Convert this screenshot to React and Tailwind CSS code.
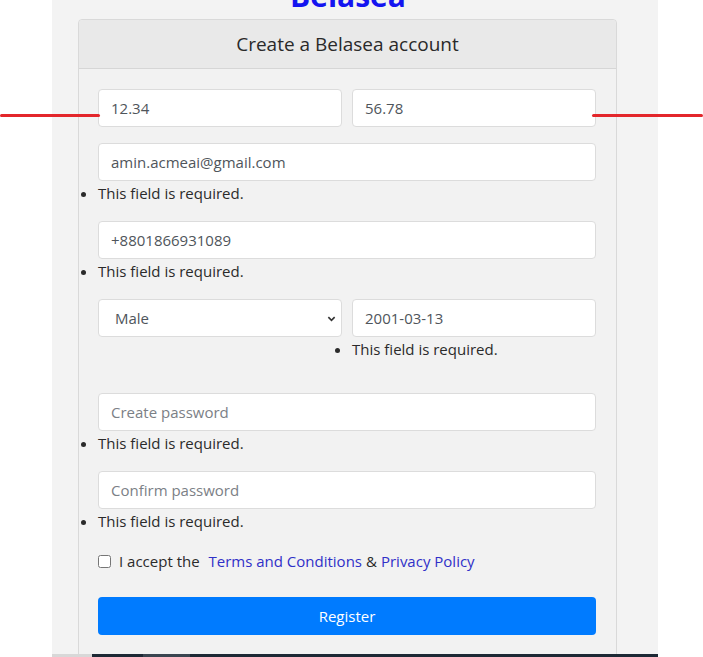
import React from 'react';

const font = { fontFamily: '"Open Sans", "Noto Sans", Arial, sans-serif' };

const inputCls =
  'block w-full h-[38px] px-3 bg-white border border-[#dcdcdc] rounded-[4px] text-[15px] text-[#4f555b] placeholder:text-[#7b8086] outline-none';

const FieldError = () => (
  <ul className="list-disc list-outside pl-0 ml-0 text-[15px] leading-6 text-[#2b2b2b]">
    <li className="ml-0">This field is required.</li>
  </ul>
);

const App = () => {
  return (
    <div className="relative w-[703px] h-[657px] overflow-hidden bg-white" style={font}>
      <div className="ml-[52px] w-[606px] h-[654px] bg-[#f3f3f3] overflow-hidden">
        <h1 className="-mt-[22px] text-center text-[30px] font-bold leading-[36px] text-[#1414f0] pr-[14px]">
          Belasea
        </h1>
        <div className="mt-[5px] ml-[26px] w-[539px] h-[700px] border border-[#d9d9d9] rounded-[4px] bg-[#f2f2f2]">
          <div className="h-[49px] flex items-center justify-center bg-[#e9e9e9] border-b border-[#d6d6d6] rounded-t-[4px]">
            <span className="text-[19px] font-medium text-[#2a2a2a]">Create a Belasea account</span>
          </div>
          <form className="pl-[19px] pr-[20px] pt-[20px]" onSubmit={(e) => e.preventDefault()}>
            <div className="grid grid-cols-2 gap-[10px]">
              <input className={inputCls} defaultValue="12.34" />
              <input className={inputCls} defaultValue="56.78" />
            </div>

            <div className="mt-4">
              <input className={inputCls} defaultValue="amin.acmeai@gmail.com" />
              <FieldError />
            </div>

            <div className="mt-4">
              <input className={inputCls} defaultValue="+8801866931089" />
              <FieldError />
            </div>

            <div className="mt-4 grid grid-cols-2 gap-[10px]">
              <div className="relative">
                <select className={`${inputCls} appearance-none px-4`} defaultValue="Male">
                  <option>Male</option>
                  <option>Female</option>
                </select>
                <svg
                  className="absolute right-[6px] top-[15px] w-[9px] h-[9px] text-[#333]"
                  viewBox="0 0 10 10"
                  fill="none"
                  stroke="currentColor"
                  strokeWidth="1.8"
                >
                  <path d="M1.5 3.5 L5 7 L8.5 3.5" />
                </svg>
              </div>
              <div>
                <input className={inputCls} defaultValue="2001-03-13" />
                <FieldError />
              </div>
            </div>

            <div className="mt-8">
              <input className={inputCls} type="password" placeholder="Create password" />
              <FieldError />
            </div>

            <div className="mt-4">
              <input className={inputCls} type="password" placeholder="Confirm password" />
              <FieldError />
            </div>

            <label className="mt-4 flex items-center h-6 text-[15px] text-[#2b2b2b]">
              <input type="checkbox" className="w-[13px] h-[13px] mr-2" />
              <span>I accept the&nbsp;</span>
              <a href="#" className="ml-[5px] text-[#3030c8]">Terms and Conditions</a>
              <span className="mx-[4px]">&amp;</span>
              <a href="#" className="text-[#3030c8]">Privacy Policy</a>
            </label>

            <button
              type="submit"
              className="mt-6 w-full h-[38px] rounded-[4px] bg-[#007bff] text-white text-[15px]"
            >
              Register
            </button>
          </form>
        </div>
      </div>
      <div className="flex h-[3px]">
        <div className="ml-[52px] w-[40px] bg-[#d8d8d8]" />
        <div className="w-[51px] bg-[#1d2935]" />
        <div className="w-[47px] bg-[#3a4550]" />
        <div className="w-[468px] bg-[#1d2935]" />
      </div>

      <div className="absolute left-0 top-[114px] w-[100px] h-[3px] rounded-full bg-[#e3262b]" />
      <div className="absolute left-[592px] top-[114px] w-[111px] h-[3px] rounded-full bg-[#e3262b]" />
    </div>
  );
};

export default App;
